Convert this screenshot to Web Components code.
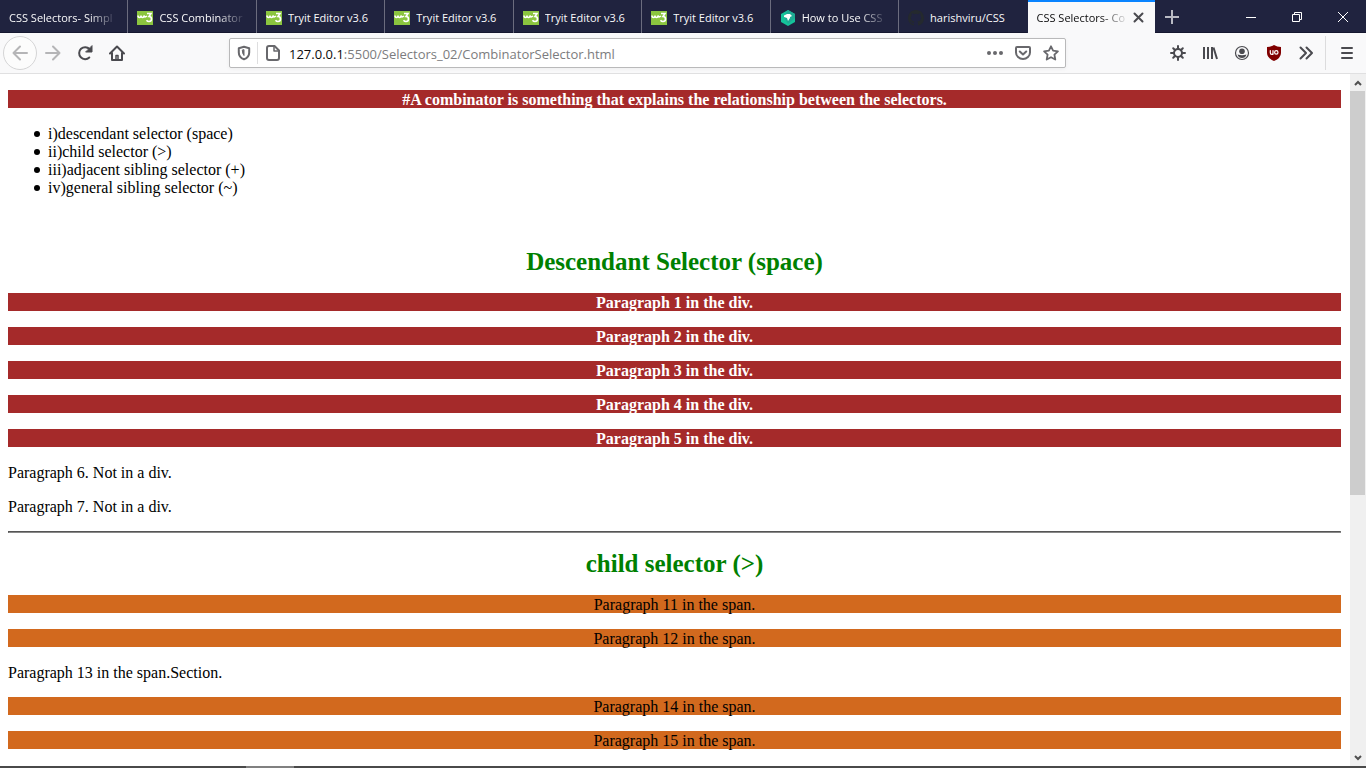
<!DOCTYPE html>
<html lang="en">
<head>
<meta charset="utf-8">
<title>CSS Selectors- Combinator</title>
<style>
html, body { height: 100%; }
body { margin: 0; font-family: "Open Sans", "Noto Sans", sans-serif; }
</style>
</head>
<body>
<browser-window>
  <tab-strip slot="tabs">
    <browser-tab fade>CSS Selectors- Simpl</browser-tab>
    <browser-tab icon="w3" fade>CSS Combinator</browser-tab>
    <browser-tab icon="w3">Tryit Editor v3.6</browser-tab>
    <browser-tab icon="w3">Tryit Editor v3.6</browser-tab>
    <browser-tab icon="w3">Tryit Editor v3.6</browser-tab>
    <browser-tab icon="w3">Tryit Editor v3.6</browser-tab>
    <browser-tab icon="hex" fade>How to Use CSS</browser-tab>
    <browser-tab icon="github" last>harishviru/CSS</browser-tab>
    <browser-tab active fade>CSS Selectors- Co</browser-tab>
  </tab-strip>
  <nav-toolbar slot="toolbar"></nav-toolbar>
  <page-content>
    <text-bar tone="brown">#A combinator is something that explains the relationship between the selectors.</text-bar>
    <selector-list></selector-list>
    <section-title>Descendant Selector (space)</section-title>
    <text-bar tone="brown">Paragraph 1 in the div.</text-bar>
    <text-bar tone="brown">Paragraph 2 in the div.</text-bar>
    <text-bar tone="brown">Paragraph 3 in the div.</text-bar>
    <text-bar tone="brown">Paragraph 4 in the div.</text-bar>
    <text-bar tone="brown">Paragraph 5 in the div.</text-bar>
    <text-bar>Paragraph 6. Not in a div.</text-bar>
    <text-bar>Paragraph 7. Not in a div.</text-bar>
    <section-rule></section-rule>
    <section-title>child selector (&gt;)</section-title>
    <text-bar tone="chocolate">Paragraph 11 in the span.</text-bar>
    <text-bar tone="chocolate">Paragraph 12 in the span.</text-bar>
    <text-bar>Paragraph 13 in the span.Section.</text-bar>
    <text-bar tone="chocolate">Paragraph 14 in the span.</text-bar>
    <text-bar tone="chocolate">Paragraph 15 in the span.</text-bar>
  </page-content>
  <scroll-track slot="scroll"></scroll-track>
</browser-window>
<script>
const define = (name, html, setup) => customElements.define(name, class extends HTMLElement {
  constructor() {
    super();
    this.attachShadow({ mode: "open" }).innerHTML = html;
  }
  connectedCallback() { if (setup) setup(this, this.shadowRoot); }
});

const ICONS = {
  w3: `<svg viewBox="0 0 16 16" width="16" height="16"><rect y="1" width="16" height="14" fill="#8bc53f"/><path d="M1 5.500q0 2 1.500 2t1.500-2q0 2 1.500 2t1.500-2q.5 2.500 3 .5" fill="none" stroke="#fff" stroke-width="1.600"/><path d="M10 3.500h4L12 6.500q2.500 0 2.500 2.500T12 11.500q-1.500 0-2.500-1.300" fill="none" stroke="#fff" stroke-width="1.600"/></svg>`,
  hex: `<svg viewBox="0 0 16 16" width="16" height="16"><path d="M8 0l7 4v8l-7 4-7-4V4z" fill="#15c39a"/><path d="M8 0l7 4v4L8 14 4 7z" fill="#1faa94"/><path d="M4 5.500L7 4h3l2 2-2 1v1l-2 3-1-3-3-1z" fill="#fff"/></svg>`,
  github: `<svg viewBox="0 0 16 16" width="16" height="16"><path fill="#24292e" fill-rule="evenodd" d="M8 0C3.580 0 0 3.580 0 8c0 3.540 2.290 6.530 5.470 7.590.4.070.55-.17.55-.38 0-.19-.01-.82-.01-1.490-2.010.37-2.530-.49-2.690-.94-.09-.23-.48-.94-.82-1.130-.28-.15-.68-.52-.01-.53.63-.01 1.080.58 1.230.82.72 1.210 1.870.87 2.330.66.07-.52.28-.87.51-1.070-1.780-.2-3.640-.89-3.640-3.950 0-.87.31-1.590.82-2.150-.08-.2-.36-1.020.08-2.120 0 0 .67-.21 2.200.82a7.400 7.400 0 0 1 4 0c1.530-1.040 2.200-.82 2.200-.82.44 1.100.16 1.920.08 2.120.51.56.82 1.270.82 2.150 0 3.070-1.870 3.750-3.650 3.950.29.25.54.73.54 1.480 0 1.070-.01 1.930-.01 2.200 0 .21.15.46.55.38A8 8 0 0 0 16 8c0-4.420-3.580-8-8-8z"/></svg>`
};

define("browser-window", `
<style>
:host { display: flex; flex-direction: column; height: 100vh; overflow: hidden; background: #fff; }
main { flex: 1; min-height: 0; display: flex; }
.page { flex: 1; min-width: 0; overflow: hidden; }
footer { height: 2px; flex: none; background: #4a4a4a; display: grid; grid-template-columns: 18% 48px; }
footer i { background: #808080; grid-column: 2; }
</style>
<slot name="tabs"></slot>
<slot name="toolbar"></slot>
<main><div class="page"><slot></slot></div><slot name="scroll"></slot></main>
<footer><i></i></footer>`);

define("tab-strip", `
<style>
:host { display: flex; height: 33px; flex: none; background: #20233f; }
.tabs { flex: 1; min-width: 0; display: flex; }
.side { width: 211px; display: flex; align-items: center; box-shadow: inset 0 -1px #15172f; }
button { border: 0; padding: 0; margin: 0; background: none; display: flex; justify-content: center; align-items: center; height: 32px; width: 46px; }
.new { width: 34px; margin-right: auto; }
svg { display: block; }
</style>
<div class="tabs"><slot></slot></div>
<div class="side">
<button class="new" aria-label="New tab"><svg width="16" height="16" viewBox="0 0 16 16"><path d="M8 1v14M1 8h14" stroke="#b9bac4" stroke-width="2"/></svg></button>
<button aria-label="Minimize"><svg width="10" height="10"><path d="M0 5.500h10" stroke="#fff"/></svg></button>
<button aria-label="Restore"><svg width="10" height="10" fill="none" stroke="#fff"><path d="M.5 2.500h7v7h-7zM2.500 2.500v-2h7v7h-2"/></svg></button>
<button aria-label="Close window"><svg width="10" height="10"><path d="M0 0l10 10M10 0L0 10" stroke="#fff"/></svg></button>
</div>`);

define("browser-tab", `
<style>
:host { flex: 1; min-width: 0; display: flex; align-items: center; gap: 6px; padding: 2px 10px 0 9px; box-sizing: border-box; height: 33px; color: #f9f9fa; font-size: 11px; line-height: 18px; border-right: 1px solid #6b6c7e; box-shadow: inset 0 -1px #15172f; }
:host([last]) { border-color: transparent; }
:host([active]) { background: #f9f9fa; color: #0c0c0d; border: 0; box-shadow: inset 0 2px #0a84ff; gap: 4px; }
.label { flex: 1; min-width: 0; overflow: hidden; white-space: nowrap; }
:host([fade]) .label { -webkit-mask-image: linear-gradient(to left, transparent, #000 28px); mask-image: linear-gradient(to left, transparent, #000 28px); }
svg { display: block; flex: none; }
.icon:empty, .close { display: none; }
:host([active]) .close { display: block; border: 0; padding: 0; background: none; }
</style>
<span class="icon"></span><span class="label"><slot></slot></span>
<button class="close" aria-label="Close tab"><svg width="12" height="12" viewBox="0 0 12 12"><path d="M1.500 1.500l8 8M9.500 1.500l-8 8" stroke="#4a4a4f" stroke-width="2" stroke-linecap="round"/></svg></button>`,
(el, root) => { root.querySelector(".icon").innerHTML = ICONS[el.getAttribute("icon")] || ""; });

define("nav-toolbar", `
<style>
:host { display: flex; align-items: center; height: 41px; flex: none; box-sizing: border-box; background: #f9f9fa; border-bottom: 1px solid #e0e0e1; }
.nav { width: 229px; display: flex; align-items: center; padding-left: 3px; box-sizing: border-box; flex: none; }
button { border: 0; padding: 0; margin: 0; background: none; width: 32px; height: 34px; display: flex; align-items: center; justify-content: center; flex: none; }
.back { width: 34px; border: 1px solid #d5d5d6; border-radius: 50%; background: #fcfcfc; }
svg { display: block; fill: none; stroke: #4a4a4f; stroke-width: 2; stroke-linecap: round; stroke-linejoin: round; }
.off svg { stroke: #b5b5b7; }
.url { flex: 1; min-width: 0; height: 30px; box-sizing: border-box; border: 1px solid #b9b9ba; border-radius: 2px; background: #fff; display: flex; align-items: center; box-shadow: 0 1px 4px #0000000d; }
.url button { width: 28px; height: 28px; }
.url svg { stroke: #68686c; }
.url .shield { border-right: 1px solid #dededf; height: 22px; }
.url .shield + button { width: 30px; }
.address { flex: 1; min-width: 0; font-size: 13px; line-height: 20px; padding: 2px 0 0 1px; white-space: nowrap; color: #7c7c7e; }
.address b { font-weight: 400; color: #0c0c0d; }
.tools { width: 300px; flex: none; display: flex; align-items: center; justify-content: flex-end; box-sizing: border-box; padding-right: 3px; }
.menu { border-left: 1px solid #dcdcdd; width: 38px; margin-left: 3px; padding-left: 5px; }
</style>
<div class="nav">
<button class="back off" aria-label="Back"><svg width="16" height="16"><path d="M1.500 8H15M8 1.500L1.500 8 8 14.500"/></svg></button>
<button class="off" aria-label="Forward"><svg width="16" height="16"><path d="M1 8h13.500M8 1.500L14.500 8 8 14.500"/></svg></button>
<button aria-label="Reload"><svg width="16" height="16"><path d="M12.300 12.500A6 6 0 1 1 12.500 4"/><path d="M15 1v6H9z" fill="#4a4a4f" stroke-width="1"/></svg></button>
<button aria-label="Home"><svg width="16" height="16"><path d="M1 8.500L8 1.500l7 7M3 8v7h10V8"/><path d="M7 14.500v-4h2v4" stroke-width="1.500"/></svg></button>
</div>
<div class="url" role="group" aria-label="Address">
<button class="shield" aria-label="Protections"><svg width="16" height="16"><path d="M8 1.800l5.200 1.400V7.500q0 5-5.200 6.800-5.200-1.800-5.200-6.800V3.200z"/><path d="M8 5v5.500Q6.500 9 6.300 5.400z" fill="#68686c" stroke-width="1"/></svg></button>
<button aria-label="Site information"><svg width="16" height="16"><path d="M4 1h5.500L14 5.500V13q0 2-2 2H4q-2 0-2-2V3q0-2 2-2z"/><path d="M9 1v5h5" stroke-width="1.500"/></svg></button>
<div class="address"><b>127.0.0.1</b>:5500/Selectors_02/CombinatorSelector.html</div>
<button aria-label="Page actions"><svg width="16" height="16"><g fill="#68686c" stroke="none"><circle cx="2" cy="8" r="2"/><circle cx="8" cy="8" r="2"/><circle cx="14" cy="8" r="2"/></g></svg></button>
<button aria-label="Save to Pocket"><svg width="16" height="16"><path d="M2 2h12q1 0 1 1v4.500a7 6.500 0 0 1-14 0V3q0-1 1-1zM4.800 6.500L8 9.500l3.200-3"/></svg></button>
<button aria-label="Bookmark"><svg width="16" height="16"><path d="M8 1.300l2.100 4.400 4.800.6-3.500 3.300.9 4.900L8 12.200l-4.300 2.300.9-4.900L1.100 6.300l4.800-.6z" stroke-width="1.800"/></svg></button>
</div>
<div class="tools">
<button aria-label="Settings"><svg width="16" height="16"><circle cx="8" cy="8" r="4"/><path d="M8 1v3M8 12v3M1 8h3M12 8h3M3.200 3.200l2 2M10.800 10.800l2 2M3.200 12.800l2-2M10.800 5.200l2-2"/></svg></button>
<button aria-label="Library"><svg width="16" height="16"><path d="M2 2v12M6 2v12M10 2v12M11.500 2.500L15 14" stroke-linecap="butt"/></svg></button>
<button aria-label="Account"><svg width="16" height="16"><circle cx="8" cy="8" r="6.500" stroke-width="1.200"/><circle cx="8" cy="6.300" r="2.800" fill="#4a4a4f" stroke="none"/><path d="M3.500 9.500q4.500 1.500 9 0-1 3.500-4.500 3.500t-4.500-3.500z" fill="#4a4a4f" stroke="none"/></svg></button>
<button aria-label="uBlock Origin"><svg width="16" height="16"><path d="M8 0q3 1.800 7 2v6q0 5-7 8-7-3-7-8V2q4-.2 7-2z" fill="#800000" stroke="none"/><path d="M4.300 5.500v2.200q0 1.600 1.400 1.600T7 7.700V5.500M7 9.300V5.500" stroke="#fff" stroke-width="1.200"/><circle cx="10.300" cy="7.400" r="1.700" stroke="#fff" stroke-width="1.200"/></svg></button>
<button aria-label="More tools"><svg width="16" height="16"><path d="M2.500 2.500L8 8l-5.500 5.500M8.500 2.500L14 8l-5.500 5.500"/></svg></button>
<button class="menu" aria-label="Open menu"><svg width="16" height="16"><path d="M3 3h10M3 8h10M3 13h10"/></svg></button>
</div>`);

define("page-content", `
<style>
:host { display: flex; flex-direction: column; gap: 16px; padding: 16px 8px; font-family: "Liberation Serif", serif; font-size: 16px; line-height: 18px; color: #000; }
</style><slot></slot>`);

define("text-bar", `
<style>
:host { display: block; }
p { margin: 0; padding-top: 2px; line-height: 16px; }
:host([tone]) { text-align: center; }
:host([tone="brown"]) { background: brown; color: #fff; font-weight: 700; }
:host([tone="chocolate"]) { background: chocolate; }
</style><p><slot></slot></p>`);

define("selector-list", `
<style>
:host { display: block; padding-bottom: 34px; }
ul { list-style: none; margin: 0; padding: 1px 0 0 26px; }
li { display: flex; align-items: center; gap: 8px; }
li::before { content: ""; width: 6px; height: 6px; border-radius: 50%; background: #000; }
</style>
<ul><li>i)descendant selector (space)</li><li>ii)child selector (&gt;)</li><li>iii)adjacent sibling selector (+)</li><li>iv)general sibling selector (~)</li></ul>`);

define("section-title", `
<style>
:host { display: block; }
h2 { margin: 0; text-align: center; color: green; font-size: 25px; line-height: 30px; }
</style><h2><slot></slot></h2>`);

define("section-rule", `
<style>
:host { display: block; }
hr { margin: 0; border: 1px solid; border-color: #555 #888 #888 #555; }
</style><hr>`);

define("scroll-track", `
<style>
:host { display: flex; flex-direction: column; width: 17px; flex: none; background: #f0f0f0; border-left: 1px solid #fff; box-sizing: border-box; }
button { height: 17px; border: 0; padding: 0; background: none; display: flex; align-items: center; justify-content: center; flex: none; }
.track { flex: 1; }
.thumb { height: 61.4%; background: #cdcdcd; margin-right: 1px; }
svg { fill: none; stroke: #505050; stroke-width: 2; }
</style>
<button aria-label="Scroll up"><svg width="8" height="6"><path d="M1 5l3-3 3 3"/></svg></button>
<div class="track"><div class="thumb"></div></div>
<button aria-label="Scroll down"><svg width="8" height="6"><path d="M1 1l3 3 3-3"/></svg></button>`);
</script>
</body>
</html>
